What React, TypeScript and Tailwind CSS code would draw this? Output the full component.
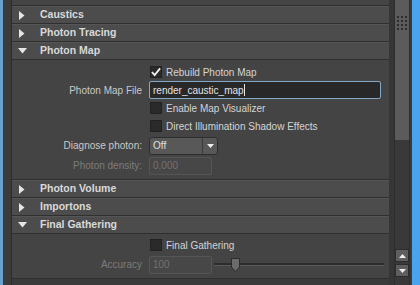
import React from "react";

function Arrow({ open }: { open?: boolean }) {
  return open ? (
    <svg width="9" height="6" viewBox="0 0 9 6" className="ml-[6px] mr-[13px]">
      <path d="M0 0 L9 0 L4.5 5.5 Z" fill="#e6e6e6" />
    </svg>
  ) : (
    <svg width="6" height="9" viewBox="0 0 6 9" className="ml-[7px] mr-[15px]">
      <path d="M0 0 L5.5 4.5 L0 9 Z" fill="#e6e6e6" />
    </svg>
  );
}

function Header({ title, open }: { title: string; open?: boolean }) {
  return (
    <div className="h-[18px] flex items-center bg-[#4c4c4c] border-t border-[#555] border-b border-b-[#2f2f2f]">
      <Arrow open={open} />
      <span className="font-bold text-[10.5px] text-[#d9d9d9]">{title}</span>
    </div>
  );
}

function Check({ checked, label }: { checked?: boolean; label: string }) {
  return (
    <div className="h-[18px] flex items-center pl-[138px]">
      <div className="w-[12px] h-[12px] bg-[#2a2a2a] border border-[#222] flex items-center justify-center">
        {checked && (
          <svg width="11" height="10" viewBox="0 0 11 10">
            <path d="M1 5 L4 8.5 L10 1" stroke="#f2f2f2" strokeWidth="2" fill="none" />
          </svg>
        )}
      </div>
      <span className="ml-[4px] text-[10px] text-[#d4d4d4]">{label}</span>
    </div>
  );
}

function Label({ text, dim }: { text: string; dim?: boolean }) {
  return (
    <span className={"w-[130px] text-right text-[10px] mr-[7px] " + (dim ? "text-[#7c7c7c]" : "text-[#c9c9c9]")}>
      {text}
    </span>
  );
}

export default function App() {
  return (
    <div
      className="w-[420px] h-[285px] flex bg-[#3b3b3b] overflow-hidden"
      style={{ fontFamily: "'Liberation Sans', Arial, sans-serif" }}
    >
      <div className="w-[3px] bg-[#6a9fd0]" />
      <div className="w-[8px] bg-[#3b3b3b]" />
      <div className="w-[378px] flex flex-col border-l border-[#2c2c2c]">
        <div className="h-[6px] bg-[#454545] border-b border-[#2f2f2f]" />
        <Header title="Caustics" />
        <Header title="Photon Tracing" />
        <Header title="Photon Map" open />
        <div className="h-[120px] bg-[#444] border-b border-[#2f2f2f] pt-[3px]">
          <Check checked label="Rebuild Photon Map" />
          <div className="h-[18px] flex items-center">
            <Label text="Photon Map File" />
            <div className="w-[232px] h-[18px] bg-[#282828] border border-[#86a8c8] rounded-[2px] flex items-center pl-[3px] text-[10px] text-[#e4e4e4]">
              render_caustic_map
              <span className="w-px h-[12px] bg-[#e4e4e4]" />
            </div>
          </div>
          <Check label="Enable Map Visualizer" />
          <Check label="Direct Illumination Shadow Effects" />
          <div className="h-[19px] mt-[1px] flex items-center">
            <Label text="Diagnose photon:" />
            <div className="w-[69px] h-[18px] bg-[#585858] border border-[#2e2e2e] rounded-[3px] flex items-center text-[10px] text-[#e0e0e0]">
              <span className="flex-1 pl-[3px]">Off</span>
              <div className="w-[15px] h-full border-l border-[#3a3a3a] flex items-center justify-center">
                <svg width="7" height="4" viewBox="0 0 7 4">
                  <path d="M0 0 L7 0 L3.5 4 Z" fill="#f0f0f0" />
                </svg>
              </div>
            </div>
          </div>
          <div className="h-[19px] mt-[1px] flex items-center">
            <Label text="Photon density:" dim />
            <div className="w-[63px] h-[18px] bg-[#474747] border border-[#555] rounded-[2px] flex items-center pl-[3px] text-[10px] text-[#727272]">
              0.000
            </div>
          </div>
        </div>
        <Header title="Photon Volume" />
        <Header title="Importons" />
        <Header title="Final Gathering" open />
        <div className="h-[45px] bg-[#444] border-b border-[#2f2f2f] pt-[2px]">
          <Check label="Final Gathering" />
          <div className="h-[19px] mt-[1px] flex items-center">
            <Label text="Accuracy" dim />
            <div className="w-[63px] h-[18px] bg-[#474747] border border-[#555] rounded-[2px] flex items-center pl-[3px] text-[10px] text-[#727272]">
              100
            </div>
            <div className="relative w-[170px] h-[18px] ml-[2px] flex items-center">
              <div className="w-full h-[3px] bg-[#2c2c2c] border-b border-[#5a5a5a]" />
              <svg width="9" height="14" viewBox="0 0 9 14" className="absolute left-[17px] top-[2px]">
                <path d="M0.5 0.5 H8.5 V9 L4.5 13.5 L0.5 9 Z" fill="#6b6b6b" stroke="#2c2c2c" />
              </svg>
            </div>
          </div>
        </div>
        <div className="flex-1 bg-[#3b3b3b]" />
      </div>
      <div className="w-[5px] bg-[#363636]" />
      <div className="w-[16px] flex flex-col border-l border-r border-[#2e2e2e]">
        <div className="h-[140px] bg-[#5b5b5b] flex justify-center pt-[16px]">
          <div className="grid grid-cols-3 gap-[2px] h-fit">
            {[...Array(12)].map((_, i) => (
              <div key={i} className="w-[2px] h-[2px] bg-[#2e2e2e]" />
            ))}
          </div>
        </div>
        <div className="flex-1 bg-[#393939] flex flex-col items-center justify-end pb-[8px] gap-[2px]">
          <div className="w-[14px] h-[13px] bg-[#5e5e5e] border border-[#2c2c2c] flex items-center justify-center">
            <svg width="7" height="4" viewBox="0 0 7 4">
              <path d="M0 4 L7 4 L3.5 0 Z" fill="#eee" />
            </svg>
          </div>
          <div className="w-[14px] h-[13px] bg-[#5e5e5e] border border-[#2c2c2c] flex items-center justify-center">
            <svg width="7" height="4" viewBox="0 0 7 4">
              <path d="M0 0 L7 0 L3.5 4 Z" fill="#eee" />
            </svg>
          </div>
        </div>
      </div>
      <div className="w-[2px] bg-[#3b3b3b]" />
      <div className="flex-1 bg-[#4aa3ee]" />
    </div>
  );
}
